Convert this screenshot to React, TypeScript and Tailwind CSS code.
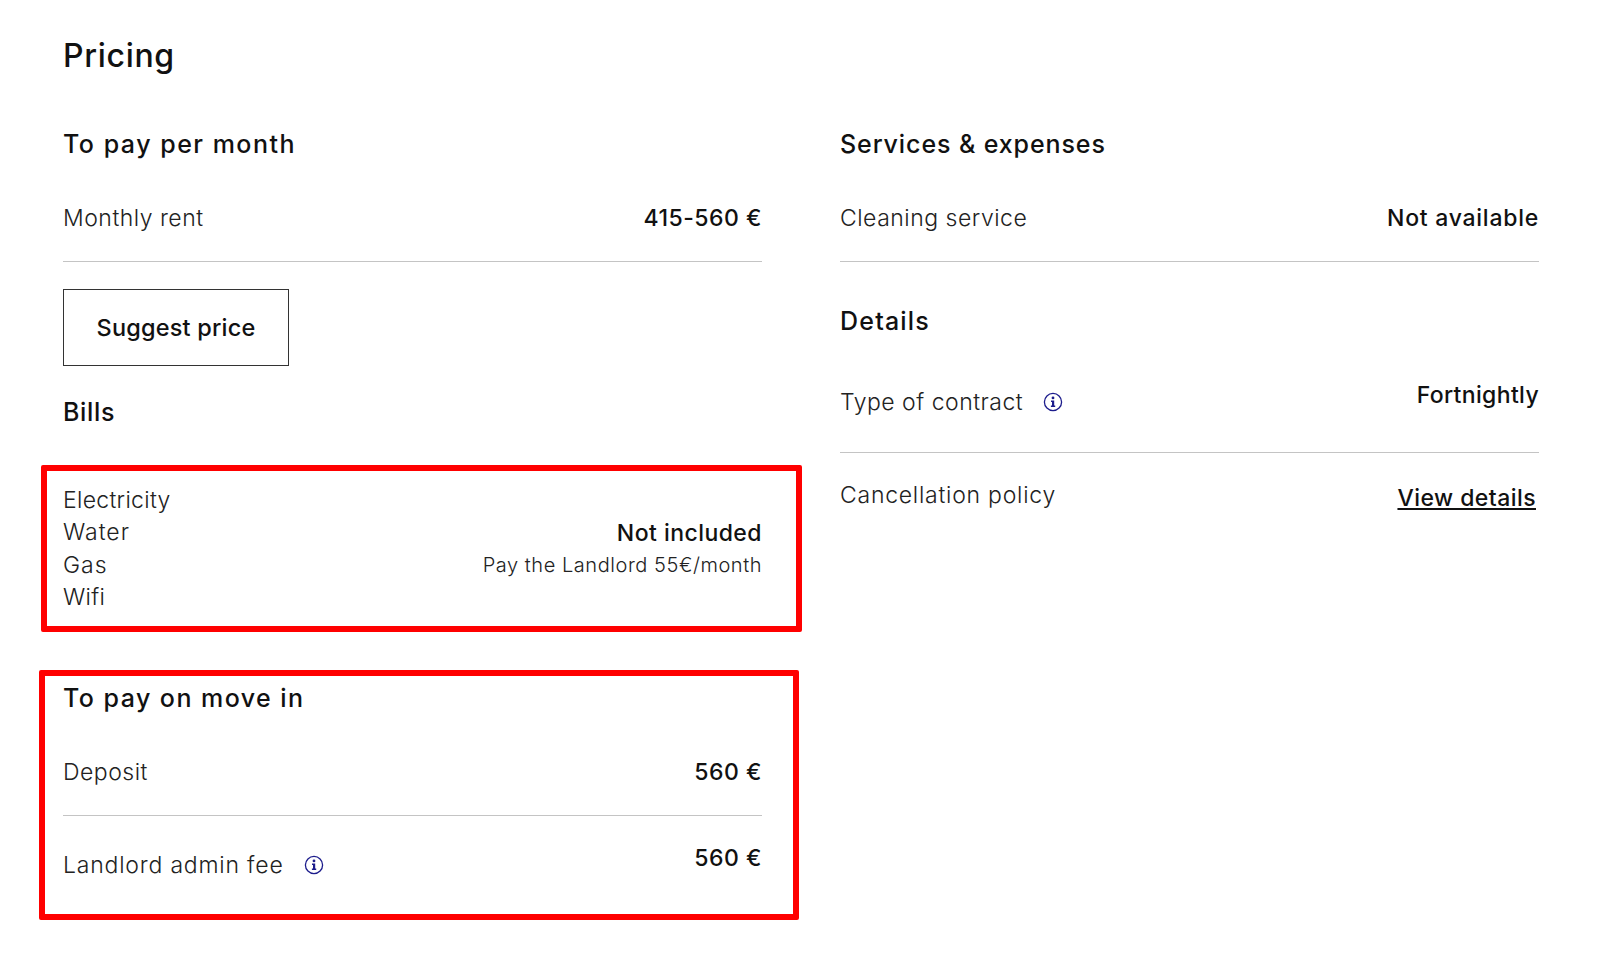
const font = "font-['Inter','Noto_Sans',sans-serif]";

function InfoIcon() {
  return (
    <svg width="20" height="20" viewBox="0 0 20 20" fill="none" className="ml-5 shrink-0">
      <circle cx="10" cy="10" r="8.6" stroke="#1c1c8c" strokeWidth="1.3" />
      <circle cx="10" cy="5.9" r="1.4" fill="#1c1c8c" />
      <path d="M8 8.6h3.2v5h1v1.4H7.9v-1.4h1.1v-3.6H8z" fill="#1c1c8c" />
    </svg>
  );
}

function Heading({ children, className = "tracking-[1.4px]" }: { children: React.ReactNode; className?: string }) {
  return <h3 className={`text-[25px] leading-[32px] font-medium text-[#111] ${className}`}>{children}</h3>;
}

function Row({ label, value, className = "" }: { label: React.ReactNode; value: React.ReactNode; className?: string }) {
  return (
    <div className={`flex justify-between border-b border-[#c4c4c4] ${className}`}>
      <div className="flex items-start font-light tracking-[0.5px] text-[#222]">{label}</div>
      <div className="font-medium tracking-[0.75px] text-[#111]">{value}</div>
    </div>
  );
}

export default function App() {
  return (
    <div className={`${font} min-h-[954px] bg-white pl-[63px] pr-[62px] pt-[36px] text-[23px] leading-[32px] tracking-[0.2px]`}>
      <h2 className="text-[32px] leading-[40px] font-medium tracking-[0.7px] text-[#111]">Pricing</h2>
      <div className="mt-[52px] grid grid-cols-[699px_699px] gap-x-[78px]">
        <div>
          <Heading className="tracking-[1.5px]">To pay per month</Heading>
          <Row
            className="mt-[42px] h-[60px]"
            label="Monthly rent"
            value={<span className="tracking-[0.5px]">415-560 €</span>}
          />
          <button className="mt-[27px] block h-[77px] w-[226px] border border-[#333] text-center text-[23.5px] leading-[30px] font-medium text-[#111]">
            Suggest price
          </button>
          <Heading className="mt-[30px] tracking-[0.7px]">Bills</Heading>
          <div className="mt-[37px] -ml-[22px] mr-[-40px] flex h-[167px] items-center justify-between rounded-[2px] border-[6px] border-[#ff0000] pl-[16px] pr-[34px]">
            <div className="font-light leading-[32.5px] tracking-[0.3px] text-[#222]">
              <div>Electricity</div>
              <div className="tracking-[1px]">Water</div>
              <div className="tracking-[1px]">Gas</div>
              <div>Wifi</div>
            </div>
            <div className="text-right">
              <div className="font-medium tracking-[0.45px] text-[#111]">Not included</div>
              <div className="text-[20px] font-light tracking-[0.55px] text-[#222]">Pay the Landlord 55€/month</div>
            </div>
          </div>
          <div className="mt-[38px] -ml-[24px] mr-[-37px] h-[250px] rounded-[2px] border-[6px] border-[#ff0000] pl-[18px] pr-[31px]">
            <Heading className="mt-[6px] tracking-[1.45px]">To pay on move in</Heading>
            <Row
              className="mt-[42px] h-[60px]"
              label="Deposit"
              value={<span className="tracking-[0.5px]">560 €</span>}
            />
            <div className="mt-[26px] flex justify-between">
              <div className="mt-[7px] flex items-center font-light tracking-[0.8px] text-[#222]">
                Landlord admin fee
                <InfoIcon />
              </div>
              <div className="font-medium tracking-[0.5px] text-[#111]">560 €</div>
            </div>
          </div>
        </div>
        <div>
          <Heading className="tracking-[0.9px]">Services &amp; expenses</Heading>
          <Row className="mt-[42px] h-[60px]" label="Cleaning service" value="Not available" />
          <Heading className="mt-[43px] tracking-[1.2px]">Details</Heading>
          <Row
            className="mt-[42px] h-[74px]"
            label={<span className="mt-[7px] flex items-center">Type of contract<InfoIcon /></span>}
            value={<span className="tracking-[0.35px]">Fortnightly</span>}
          />
          <div className="mt-[26px] flex justify-between">
            <div className="font-light tracking-[0.75px] text-[#222]">Cancellation policy</div>
            <a className="mr-[3px] mt-[3px] font-medium tracking-[0.45px] text-[#111] underline underline-offset-2">View details</a>
          </div>
        </div>
      </div>
    </div>
  );
}
